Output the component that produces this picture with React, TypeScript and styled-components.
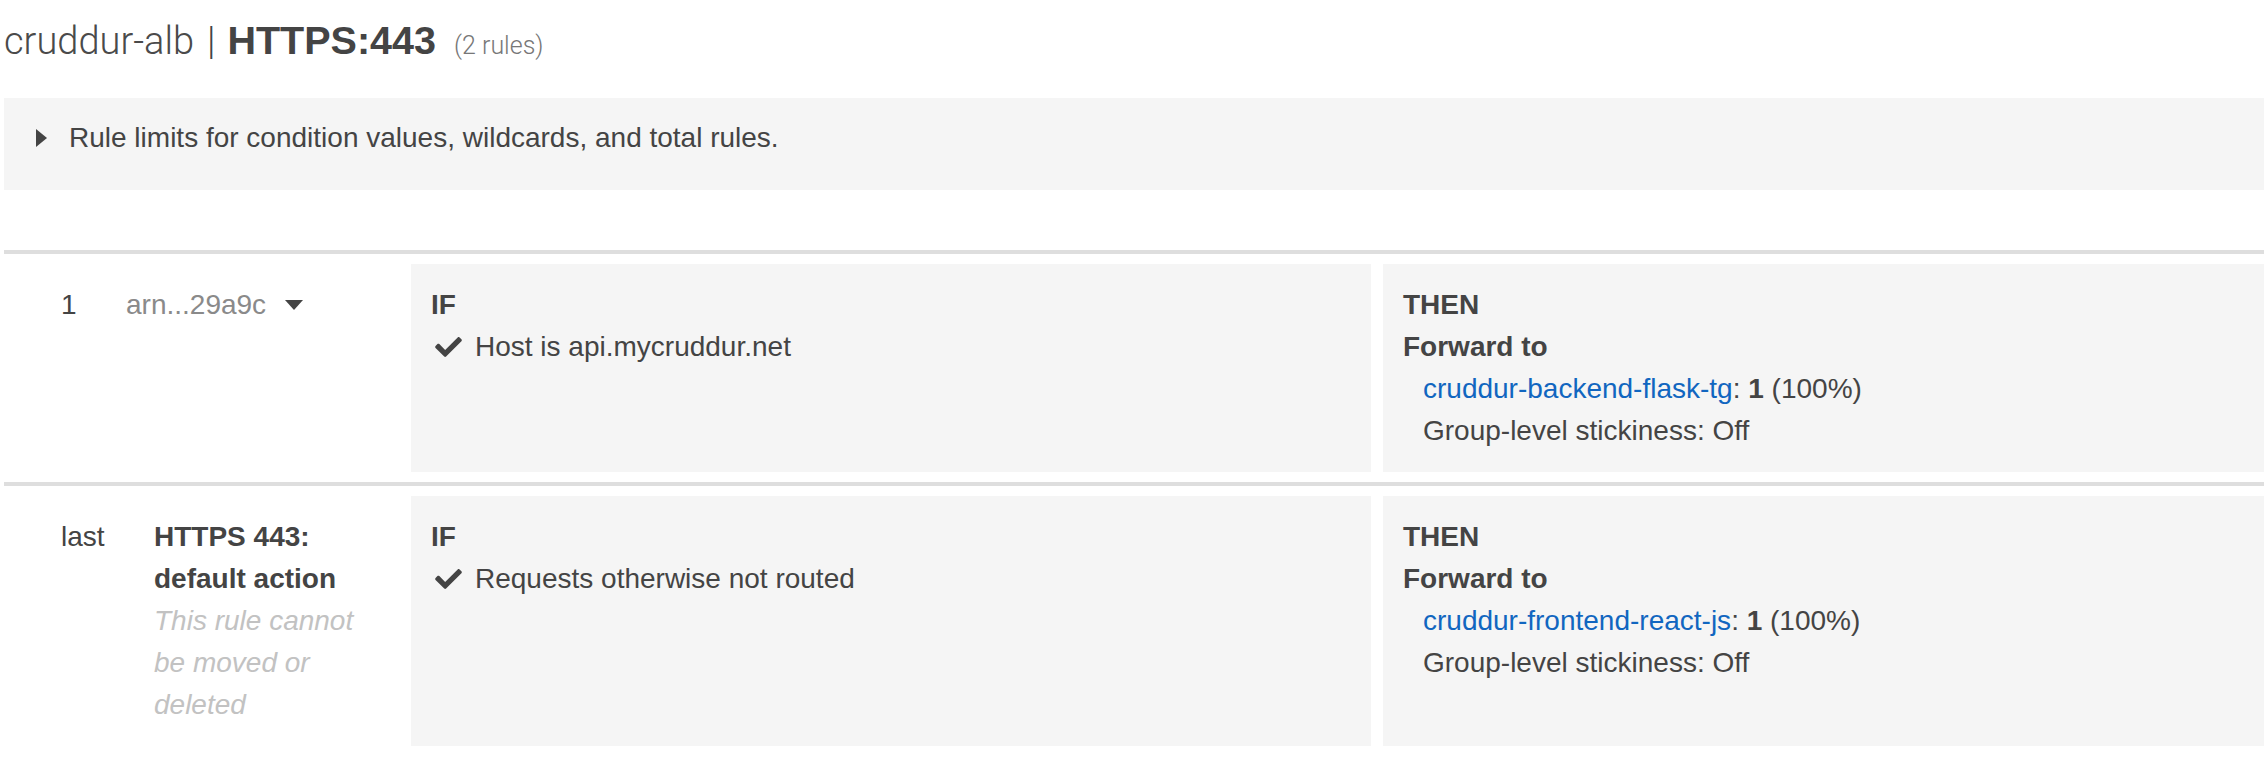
import React from "react";
import styled, { createGlobalStyle } from "styled-components";

const GlobalStyle = createGlobalStyle`
  html, body {
    margin: 0;
    padding: 0;
    background: #ffffff;
    overflow: hidden;
  }
  body {
    font-family: "Liberation Sans", Arial, Helvetica, sans-serif;
    font-size: 28px;
    line-height: 42px;
    color: #444444;
  }
`;

const Page = styled.div`
  padding-left: 4px;
  display: flex;
  flex-direction: column;
`;

const Title = styled.h1`
  margin: 18px 0 0 0;
  display: flex;
  align-items: baseline;
  font-size: 38px;
  line-height: 44px;
  font-weight: normal;
  color: #444444;
  white-space: nowrap;
`;

const LightText = styled.span`
  font-family: Roboto, "Liberation Sans", sans-serif;
  font-weight: 300;
  color: #4a4a4a;
`;

const Divider = styled.span`
  font-family: Roboto, "Liberation Sans", sans-serif;
  font-weight: 300;
  margin: 0 12px 0 13px;
  color: #444444;
`;

const StrongText = styled.span`
  font-family: "Liberation Sans", Arial, sans-serif;
  font-weight: bold;
  font-size: 39.5px;
  color: #444444;
`;

const Count = styled.span`
  font-family: Roboto, "Liberation Sans", sans-serif;
  font-weight: 300;
  font-size: 25px;
  margin-left: 18px;
  color: #777777;
`;

const Expandable = styled.div`
  margin-top: 30px;
  background: #f5f5f5;
  padding: 19px 0 31px 32px;
  display: flex;
  align-items: center;
  gap: 22px;
  color: #444444;
`;

const RuleList = styled.div`
  margin-top: 60px;
  display: flex;
  flex-direction: column;
`;

const RuleRow = styled.div`
  border-top: 4px solid #dedede;
  padding: 10px 0;
  display: flex;
  align-items: stretch;
`;

const RuleMeta = styled.div`
  flex: none;
  width: 350px;
  padding: 20px 0 20px 57px;
  display: flex;
  align-items: flex-start;
`;

const RuleNumber = styled.div<{ $width: number }>`
  flex: none;
  width: ${(p) => p.$width}px;
  color: #444444;
`;

const RuleName = styled.div`
  width: 226px;
  display: flex;
  flex-direction: column;
`;

const ArnLink = styled.span`
  display: inline-flex;
  align-items: center;
  gap: 19px;
  color: #8a8a8a;
  white-space: nowrap;
`;

const DefaultTitle = styled.span`
  font-weight: bold;
  color: #444444;
`;

const DefaultNote = styled.span`
  font-style: italic;
  color: #c2c2c2;
`;

const Panel = styled.div<{ $grow?: boolean }>`
  background: #f5f5f5;
  padding: 20px;
  box-sizing: border-box;
  ${(p) => (p.$grow ? "flex: 1; margin-left: 12px;" : "flex: none; width: 960px;")}
  display: flex;
  flex-direction: column;
`;

const PanelHeading = styled.div`
  font-weight: bold;
  color: #444444;
`;

const Condition = styled.div`
  display: flex;
  align-items: center;
  gap: 13px;
  padding-left: 4px;
`;

const TargetList = styled.div`
  padding-left: 20px;
  display: flex;
  flex-direction: column;
`;

const TargetLink = styled.a`
  color: #1166c0;
  text-decoration: none;
`;

const Bold = styled.b`
  font-weight: bold;
`;

const CaretRight = () => (
  <svg width="11" height="18" viewBox="0 0 11 18" aria-hidden="true">
    <polygon points="0,0 11,9 0,18" fill="#444444" />
  </svg>
);

const CaretDown = () => (
  <svg width="18" height="10" viewBox="0 0 18 10" aria-hidden="true">
    <polygon points="0,0 18,0 9,10" fill="#444444" />
  </svg>
);

const CheckIcon = () => (
  <svg width="27" height="20" viewBox="0 64 512 384" aria-hidden="true">
    <path
      fill="#444444"
      d="M173.898 439.404l-166.4-166.4c-9.997-9.997-9.997-26.206 0-36.204l36.203-36.204c9.997-9.998 26.207-9.998 36.204 0L192 312.69 432.095 72.596c9.997-9.997 26.207-9.997 36.204 0l36.203 36.204c9.997 9.997 9.997 26.206 0 36.204l-294.4 294.401c-9.998 9.997-26.207 9.997-36.204-.001z"
    />
  </svg>
);

type Rule = {
  number: string;
  numberWidth: number;
  name: React.ReactNode;
  condition: string;
  target: string;
};

const rules: Rule[] = [
  {
    number: "1",
    numberWidth: 65,
    name: (
      <ArnLink>
        arn...29a9c
        <CaretDown />
      </ArnLink>
    ),
    condition: "Host is api.mycruddur.net",
    target: "cruddur-backend-flask-tg",
  },
  {
    number: "last",
    numberWidth: 93,
    name: (
      <>
        <DefaultTitle>HTTPS 443: default action</DefaultTitle>
        <DefaultNote>This rule cannot be moved or deleted</DefaultNote>
      </>
    ),
    condition: "Requests otherwise not routed",
    target: "cruddur-frontend-react-js",
  },
];

export default function App() {
  return (
    <>
      <GlobalStyle />
      <Page>
        <Title>
          <LightText>cruddur-alb</LightText>
          <Divider>|</Divider>
          <StrongText>HTTPS:443</StrongText>
          <Count>(2 rules)</Count>
        </Title>
        <Expandable>
          <CaretRight />
          <span>Rule limits for condition values, wildcards, and total rules.</span>
        </Expandable>
        <RuleList>
          {rules.map((r) => (
            <RuleRow key={r.number}>
              <RuleMeta>
                <RuleNumber $width={r.numberWidth}>{r.number}</RuleNumber>
                <RuleName>{r.name}</RuleName>
              </RuleMeta>
              <Panel>
                <PanelHeading>IF</PanelHeading>
                <Condition>
                  <CheckIcon />
                  <span>{r.condition}</span>
                </Condition>
              </Panel>
              <Panel $grow>
                <PanelHeading>THEN</PanelHeading>
                <PanelHeading>Forward to</PanelHeading>
                <TargetList>
                  <span>
                    <TargetLink href="#">{r.target}</TargetLink>: <Bold>1</Bold> (100%)
                  </span>
                  <span>Group-level stickiness: Off</span>
                </TargetList>
              </Panel>
            </RuleRow>
          ))}
        </RuleList>
      </Page>
    </>
  );
}
